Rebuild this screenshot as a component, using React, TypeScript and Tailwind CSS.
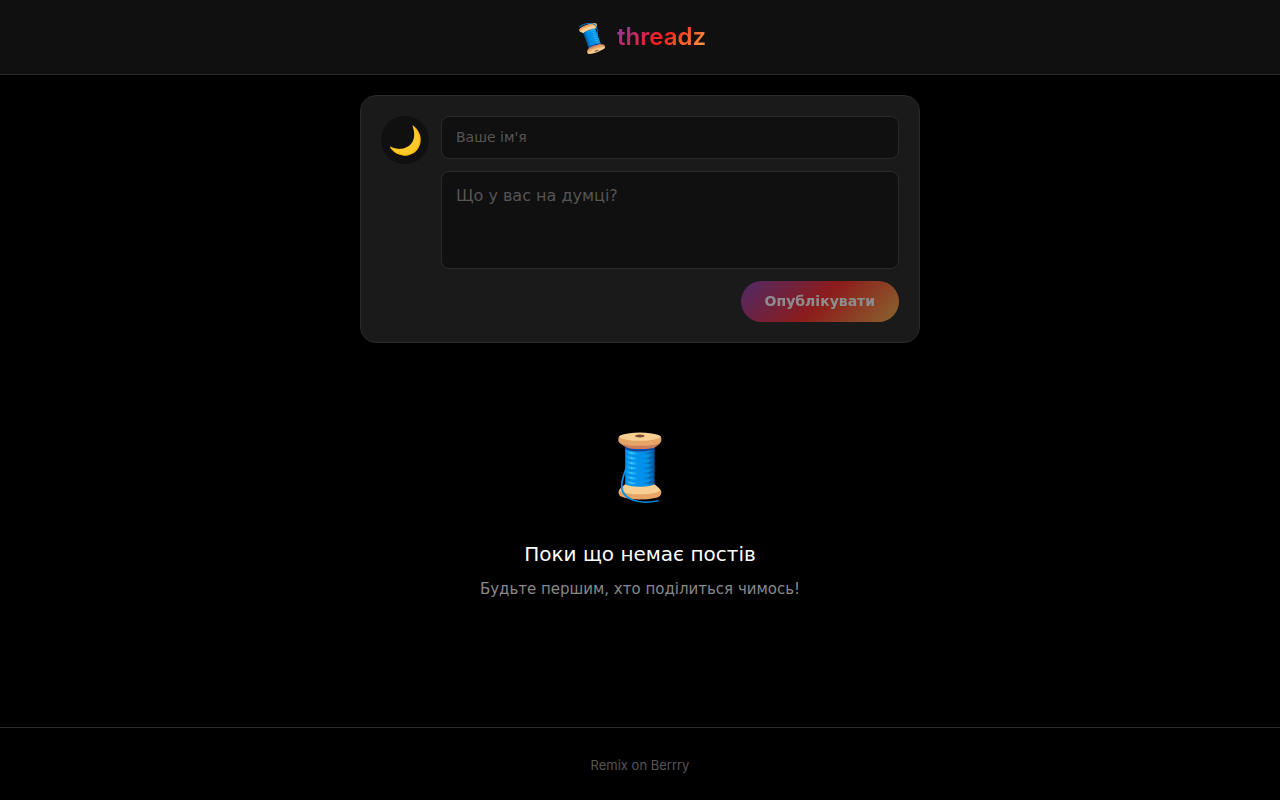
import { useState } from 'react';

export default function App() {
  const [name, setName] = useState('');
  const [text, setText] = useState('');

  const canPost = name.trim() !== '' && text.trim() !== '';

  return (
    <div className="flex min-h-screen flex-col bg-black font-['DejaVu_Sans',sans-serif] text-white">
      <header className="flex items-center justify-center gap-2 border-b border-[#2a2a2a] bg-[#101010] py-5">
        <span className="rotate-160 text-[28px] leading-8">🧵</span>
        <h1 className="bg-linear-[135deg,#833ab4,#fd1d1d,#fcb045] bg-clip-text font-['Inter',sans-serif] text-2xl leading-[34px] font-semibold text-transparent">
          threadz
        </h1>
      </header>

      <main className="mx-auto w-full max-w-[600px] flex-1 p-5">
        {/* Composer */}
        <form
          className="flex gap-3 rounded-2xl border border-[#2a2a2a] bg-[#1a1a1a] p-5"
          onSubmit={(e) => e.preventDefault()}
        >
          <div className="flex size-12 shrink-0 items-center justify-center rounded-full bg-[#101010] pt-0.5 text-[28px] leading-none">
            🌙
          </div>
          <div className="flex min-w-0 flex-1 flex-col gap-3">
            <input
              type="text"
              aria-label="Ваше ім'я"
              placeholder="Ваше ім'я"
              value={name}
              onChange={(e) => setName(e.target.value)}
              className="h-[43px] rounded-lg border border-[#2a2a2a] bg-[#101010] px-3.5 pb-0.5 text-sm outline-none placeholder:text-[#555555]"
            />
            <textarea
              aria-label="Що у вас на думці?"
              placeholder="Що у вас на думці?"
              value={text}
              onChange={(e) => setText(e.target.value)}
              className="h-[98px] resize-none rounded-lg border border-[#2a2a2a] bg-[#101010] px-3.5 py-3 text-base outline-none placeholder:text-[#555555]"
            />
            <button
              type="submit"
              disabled={!canPost}
              className="h-[41px] self-end rounded-full bg-linear-[135deg,#833ab4,#fd1d1d,#fcb045] px-6 pb-0.5 text-sm font-bold disabled:opacity-50"
            >
              Опублікувати
            </button>
          </div>
        </form>

        {/* Empty state */}
        <section className="flex flex-col items-center px-5 py-20 text-center">
          <div className="mb-7 text-[64px] leading-[88px]">🧵</div>
          <h2 className="mb-2 text-xl leading-[30px]">Поки що немає постів</h2>
          <p className="text-[15px] leading-6 text-[#888888]">Будьте першим, хто поділиться чимось!</p>
        </section>
      </main>

      <footer className="flex h-[73px] items-center justify-center border-t border-[#2a2a2a] pt-1">
        <a href="#" className="font-['Inter',sans-serif] text-[13px] text-[#555555]">
          Remix on Berrry
        </a>
      </footer>
    </div>
  );
}
